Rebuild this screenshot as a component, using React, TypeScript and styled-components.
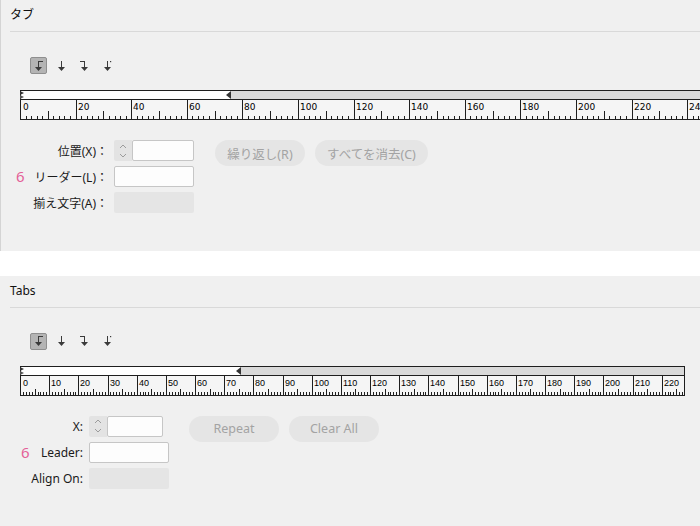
import React from 'react';
import styled, { createGlobalStyle } from 'styled-components';

const GlobalStyle = createGlobalStyle`
  html, body {
    margin: 0;
    padding: 0;
    background: #fff;
  }
  body {
    font-family: "Noto Sans", "Noto Sans CJK JP", sans-serif;
    color: #1a1a1a;
  }
`;

type TabKind = 'left' | 'center' | 'right' | 'decimal';

const TabIcon: React.FC<{ kind: TabKind }> = ({ kind }) => (
  <svg width="9" height="12" viewBox="0 0 9 12" fill="none">
    <line x1="4.5" y1="1" x2="4.5" y2="8" stroke="#3a3a3a" strokeWidth="1" />
    <polygon points="1,7 8,7 4.5,11" fill="#3a3a3a" />
    {kind === 'left' && <line x1="4" y1="1.5" x2="9" y2="1.5" stroke="#3a3a3a" />}
    {kind === 'right' && <line x1="0" y1="1.5" x2="5" y2="1.5" stroke="#3a3a3a" />}
    {kind === 'decimal' && <rect x="7" y="1" width="1.2" height="1.2" fill="#3a3a3a" />}
  </svg>
);

type ScaleProps = {
  width: number;
  ppu: number;
  major: number;
  mid: number;
  minor: number;
  font: string;
  midH: number;
};

const Scale: React.FC<ScaleProps> = ({ width, ppu, major, mid, minor, font, midH }) => {
  const h = 19;
  const ticks: React.ReactNode[] = [];
  const count = Math.floor((width + 2) / (ppu * minor));
  for (let i = 1; i <= count; i++) {
    const u = i * minor;
    const x = Math.round(20 + u * ppu) - 20.5;
    if (x > width) break;
    let top = h - 3;
    if (u % major === 0) top = 0;
    else if (u % mid === 0) top = h - midH;
    ticks.push(<line key={'t' + u} x1={x} y1={top} x2={x} y2={h} stroke="#1e1e1e" strokeWidth="1" />);
  }
  const labels: React.ReactNode[] = [];
  for (let u = 0; u * ppu < width; u += major) {
    const x = u === 0 ? 0.5 : Math.round(20 + u * ppu) - 20.5;
    labels.push(
      <text key={'l' + u} x={x + 1.5} y={9.5} fontFamily={font} fontSize="9" fill="#000">
        {u}
      </text>
    );
  }
  return (
    <ScaleSvg width={width} height={h}>
      {ticks}
      {labels}
    </ScaleSvg>
  );
};

type RulerProps = ScaleProps & { open: number };

const Ruler: React.FC<RulerProps> = ({ open, ...scale }) => (
  <RulerBox $width={scale.width}>
    <Strip>
      <StripOpen $w={open} />
      <StripRest />
      <IndentMark width="5" height="8" viewBox="0 0 5 8">
        <polygon points="0,0 4,2 0,4" fill="#333" />
        <polygon points="0,4 4,6 0,8" fill="#555" />
      </IndentMark>
      <TabMark $x={open - 5} width="5" height="8" viewBox="0 0 5 8">
        <polygon points="0,4 5,0 5,8" fill="#333" />
      </TabMark>
    </Strip>
    <Scale {...scale} />
  </RulerBox>
);

const Spinner: React.FC = () => (
  <SpinBox>
    <svg width="8" height="16" viewBox="0 0 8 16" fill="none">
      <polyline points="1,5 4,2 7,5" stroke="#9b9b9b" strokeWidth="1" />
      <polyline points="1,11 4,14 7,11" stroke="#9b9b9b" strokeWidth="1" />
    </svg>
  </SpinBox>
);

type PanelText = {
  title: string;
  pos: string;
  leader: string;
  align: string;
  repeat: string;
  clear: string;
};

type PanelProps = {
  text: PanelText;
  labelW: number;
  xFieldW: number;
  markOffset: number;
  buttonsGap: number;
  edge?: boolean;
  ruler: RulerProps;
};

const TabsPanel: React.FC<PanelProps> = ({ text, labelW, xFieldW, markOffset, buttonsGap, edge, ruler }) => (
  <Panel $edge={edge}>
    <Header>{text.title}</Header>
    <ToolBar>
      <ToolButton $active>
        <TabIcon kind="left" />
      </ToolButton>
      <ToolButton>
        <TabIcon kind="center" />
      </ToolButton>
      <ToolButton>
        <TabIcon kind="right" />
      </ToolButton>
      <ToolButton>
        <TabIcon kind="decimal" />
      </ToolButton>
    </ToolBar>
    <RulerWrap>
      <Ruler {...ruler} />
    </RulerWrap>
    <FormRow>
      <Fields $label={labelW}>
        <Label>{text.pos}</Label>
        <XField $w={xFieldW}>
          <Spinner />
          <TextInput />
        </XField>
        <Label>
          <Mark $offset={markOffset}>6</Mark>
          {text.leader}
        </Label>
        <TextInput />
        <Label>{text.align}</Label>
        <DisabledBox />
      </Fields>
      <Buttons $gap={buttonsGap}>
        <PillButton>{text.repeat}</PillButton>
        <PillButton>{text.clear}</PillButton>
      </Buttons>
    </FormRow>
  </Panel>
);

export default function App() {
  return (
    <Page>
      <GlobalStyle />
      <TabsPanel
        edge
        labelW={98}
        xFieldW={80}
        markOffset={6}
        buttonsGap={21}
        text={{
          title: 'タブ',
          pos: '位置(X)：',
          leader: 'リーダー(L)：',
          align: '揃え文字(A)：',
          repeat: '繰り返し(R)',
          clear: 'すべてを消去(C)',
        }}
        ruler={{
          width: 690,
          ppu: 2.78,
          major: 20,
          mid: 10,
          minor: 2,
          font: '"DejaVu Sans", sans-serif',
          midH: 8,
          open: 210,
        }}
      />
      <Gap />
      <TabsPanel
        labelW={73}
        xFieldW={74}
        markOffset={11}
        buttonsGap={20}
        text={{
          title: 'Tabs',
          pos: 'X:',
          leader: 'Leader:',
          align: 'Align On:',
          repeat: 'Repeat',
          clear: 'Clear All',
        }}
        ruler={{
          width: 663,
          ppu: 2.917,
          major: 10,
          mid: 5,
          minor: 1,
          font: '"Liberation Sans", sans-serif',
          midH: 6,
          open: 220,
        }}
      />
    </Page>
  );
}

const Page = styled.div`
  width: 700px;
  height: 526px;
  overflow: hidden;
  display: flex;
  flex-direction: column;
`;

const Panel = styled.section<{ $edge?: boolean }>`
  flex: 1;
  min-height: 0;
  padding-left: 10px;
  background: #f0f0f0;
  overflow: hidden;
  box-shadow: ${p => (p.$edge ? 'inset 1px 0 0 #d4d4d4' : 'none')};
`;

const Gap = styled.div`
  height: 25px;
  flex: none;
  background: #fff;
`;

const Header = styled.h2`
  margin: 0;
  height: 32px;
  box-sizing: border-box;
  padding-top: 7px;
  font-size: 12px;
  font-weight: 400;
  line-height: 16px;
  color: #111;
  border-bottom: 1px solid #d9d9d9;
`;

const ToolBar = styled.div`
  display: flex;
  align-items: center;
  gap: 6px;
  margin: 25px 0 0 20px;
`;

const ToolButton = styled.button<{ $active?: boolean }>`
  width: 17px;
  height: 17px;
  padding: 0;
  box-sizing: border-box;
  display: flex;
  align-items: center;
  justify-content: center;
  border-radius: 2px;
  border: 1px solid ${p => (p.$active ? '#8f8f8f' : 'transparent')};
  background: ${p => (p.$active ? '#b4b4b4' : 'transparent')};
`;

const RulerWrap = styled.div`
  margin: 16px 0 0 10px;
`;

const RulerBox = styled.div<{ $width: number }>`
  width: ${p => p.$width}px;
  border: 1px solid #1e1e1e;
  background: #f5f5f5;
`;

const Strip = styled.div`
  position: relative;
  display: flex;
  height: 8px;
  border-bottom: 1px solid #1e1e1e;
`;

const StripOpen = styled.div<{ $w: number }>`
  width: ${p => p.$w}px;
  background: #fff;
`;

const StripRest = styled.div`
  flex: 1;
  background: #d9d9d9;
`;

const IndentMark = styled.svg`
  position: absolute;
  left: -1px;
  top: 0;
`;

const TabMark = styled.svg<{ $x: number }>`
  position: absolute;
  left: ${p => p.$x}px;
  top: 0;
`;

const ScaleSvg = styled.svg`
  display: block;
`;

const FormRow = styled.div`
  display: flex;
  align-items: flex-start;
  margin-top: 20px;
`;

const Fields = styled.div<{ $label: number }>`
  display: grid;
  grid-template-columns: ${p => p.$label}px 80px;
  grid-auto-rows: 21px;
  column-gap: 6px;
  row-gap: 5px;
`;

const Label = styled.div`
  display: flex;
  align-items: center;
  justify-content: flex-end;
  font-size: 12px;
  color: #1a1a1a;
  white-space: nowrap;
`;

const Mark = styled.span<{ $offset: number }>`
  margin-left: ${p => p.$offset}px;
  margin-right: auto;
  font-size: 15px;
  line-height: 1;
  color: #e45f98;
`;

const XField = styled.div<{ $w: number }>`
  display: flex;
  width: ${p => p.$w}px;
`;

const SpinBox = styled.div`
  width: 18px;
  flex: none;
  display: flex;
  align-items: center;
  justify-content: center;
  background: #e3e3e3;
  border-radius: 2px 0 0 2px;
`;

const TextInput = styled.div`
  flex: 1;
  box-sizing: border-box;
  height: 21px;
  background: #fdfdfd;
  border: 1px solid #c6c6c6;
  border-radius: 2px;
`;

const DisabledBox = styled.div`
  background: #e5e5e5;
  border-radius: 2px;
`;

const Buttons = styled.div<{ $gap: number }>`
  display: flex;
  gap: 10px;
  margin-left: ${p => p.$gap}px;
`;

const PillButton = styled.button`
  height: 26px;
  min-width: 90px;
  padding: 0 12px;
  border: none;
  border-radius: 13px;
  background: #e5e5e5;
  color: #a3a3a3;
  font-family: "Noto Sans", "Noto Sans CJK JP", sans-serif;
  font-size: 12.5px;
`;
